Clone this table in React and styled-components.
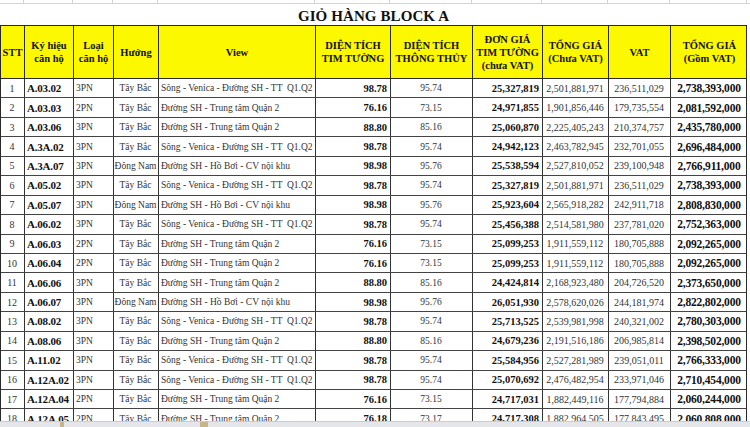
import React from "react";
import styled, { createGlobalStyle } from "styled-components";

const GlobalStyle = createGlobalStyle`
  html, body { margin: 0; padding: 0; background: #ffffff; }
  body { width: 750px; height: 427px; overflow: hidden; font-family: "Liberation Serif", "Times New Roman", serif; }
`;

const COLS = "24px 49px 40px 45px 157px 75px 82px 70px 66px 62px 77px";

const SONG = "Sông - Venica - Đường SH - TT  Q1.Q2";
const TTQ2 = "Đường SH - Trung tâm Quận 2";
const HOBOI = "Đường SH - Hồ Bơi - CV nội khu";

const rows = [
  ["1", "A.03.02", "3PN", "Tây Bắc", SONG, "98.78", "95.74", "25,327,819", "2,501,881,971", "236,511,029", "2,738,393,000"],
  ["2", "A.03.03", "2PN", "Tây Bắc", TTQ2, "76.16", "73.15", "24,971,855", "1,901,856,446", "179,735,554", "2,081,592,000"],
  ["3", "A.03.06", "3PN", "Tây Bắc", TTQ2, "88.80", "85.16", "25,060,870", "2,225,405,243", "210,374,757", "2,435,780,000"],
  ["4", "A.3A.02", "3PN", "Tây Bắc", SONG, "98.78", "95.74", "24,942,123", "2,463,782,945", "232,701,055", "2,696,484,000"],
  ["5", "A.3A.07", "3PN", "Đông Nam", HOBOI, "98.98", "95.76", "25,538,594", "2,527,810,052", "239,100,948", "2,766,911,000"],
  ["6", "A.05.02", "3PN", "Tây Bắc", SONG, "98.78", "95.74", "25,327,819", "2,501,881,971", "236,511,029", "2,738,393,000"],
  ["7", "A.05.07", "3PN", "Đông Nam", HOBOI, "98.98", "95.76", "25,923,604", "2,565,918,282", "242,911,718", "2,808,830,000"],
  ["8", "A.06.02", "3PN", "Tây Bắc", SONG, "98.78", "95.74", "25,456,388", "2,514,581,980", "237,781,020", "2,752,363,000"],
  ["9", "A.06.03", "2PN", "Tây Bắc", TTQ2, "76.16", "73.15", "25,099,253", "1,911,559,112", "180,705,888", "2,092,265,000"],
  ["10", "A.06.04", "2PN", "Tây Bắc", TTQ2, "76.16", "73.15", "25,099,253", "1,911,559,112", "180,705,888", "2,092,265,000"],
  ["11", "A.06.06", "3PN", "Tây Bắc", TTQ2, "88.80", "85.16", "24,424,814", "2,168,923,480", "204,726,520", "2,373,650,000"],
  ["12", "A.06.07", "3PN", "Đông Nam", HOBOI, "98.98", "95.76", "26,051,930", "2,578,620,026", "244,181,974", "2,822,802,000"],
  ["13", "A.08.02", "3PN", "Tây Bắc", SONG, "98.78", "95.74", "25,713,525", "2,539,981,998", "240,321,002", "2,780,303,000"],
  ["14", "A.08.06", "3PN", "Tây Bắc", TTQ2, "88.80", "85.16", "24,679,236", "2,191,516,186", "206,985,814", "2,398,502,000"],
  ["15", "A.11.02", "3PN", "Tây Bắc", SONG, "98.78", "95.74", "25,584,956", "2,527,281,989", "239,051,011", "2,766,333,000"],
  ["16", "A.12A.02", "3PN", "Tây Bắc", SONG, "98.78", "95.74", "25,070,692", "2,476,482,954", "233,971,046", "2,710,454,000"],
  ["17", "A.12A.04", "2PN", "Tây Bắc", TTQ2, "76.16", "73.15", "24,717,031", "1,882,449,116", "177,794,884", "2,060,244,000"],
  ["18", "A.12A.05", "2PN", "Tây Bắc", TTQ2, "76.18", "73.17", "24,717,308", "1,882,964,505", "177,843,495", "2,060,808,000"],
];

// how each column looks in the body
const colStyle = [
  { align: "center", size: 10 },
  { align: "left", size: 11, bold: true, tight: true },
  { align: "left", size: 9.5 },
  { align: "center", size: 9.5 },
  { align: "left", size: 9.5 },
  { align: "right", size: 10.5, bold: true },
  { align: "center", size: 9.5 },
  { align: "right", size: 10.5, bold: true },
  { align: "center", size: 10 },
  { align: "center", size: 10 },
  { align: "center", size: 11.5, bold: true, tight: true },
];

const headers = [
  ["STT"],
  ["Ký hiệu", "căn hộ"],
  ["Loại", "căn hộ"],
  ["Hướng"],
  ["View"],
  ["DIỆN TÍCH", "TIM TƯỜNG"],
  ["DIỆN TÍCH", "THÔNG THỦY"],
  ["ĐƠN GIÁ", "TIM TƯỜNG", "(chưa VAT)"],
  ["TỔNG GIÁ", "(Chưa VAT)"],
  ["VAT"],
  ["TỔNG GIÁ", "(Gồm VAT)"],
];

export default function App() {
  return (
    <>
      <GlobalStyle />
      <Sheet>
        <GridStrip>
          {headers.map((_, i) => <GridTick key={i} />)}
        </GridStrip>
        <TitleRow>
          <Title>GIỎ HÀNG BLOCK A</Title>
        </TitleRow>
        <Table>
          <HeadRow>
            {headers.map((lines, i) => (
              <HeadCell key={i}>
                {lines.map((l, j) => <span key={j}>{l}</span>)}
              </HeadCell>
            ))}
          </HeadRow>
          {rows.map((row, r) => (
            <Row key={r}>
              {row.map((val, c) => (
                <Cell
                  key={c}
                  $align={colStyle[c].align}
                  $size={colStyle[c].size}
                  $bold={colStyle[c].bold}
                  $tight={colStyle[c].tight}
                >
                  {val}
                </Cell>
              ))}
            </Row>
          ))}
        </Table>
        <BottomBar>
          <BarMark />
          <BarMark $wide />
        </BottomBar>
      </Sheet>
    </>
  );
}

const Sheet = styled.div`
  position: relative;
  width: 750px;
  height: 427px;
  overflow: hidden;
  background: #ffffff;
`;

const GridStrip = styled.div`
  display: grid;
  grid-template-columns: ${COLS} 1fr;
  height: 3px;
  border-bottom: 1px solid #d4d4d4;
`;

const GridTick = styled.div`
  border-right: 1px solid #d4d4d4;
`;

const TitleRow = styled.div`
  display: flex;
  justify-content: center;
  align-items: flex-end;
  height: 21px;
  width: 747px;
`;

const Title = styled.div`
  font-size: 15px;
  font-weight: bold;
  color: #111;
  line-height: 16px;
  padding-bottom: 1px;
  letter-spacing: 0.1px;
`;

const Table = styled.div`
  width: 747px;
  border-top: 1px solid #2a2a2a;
  border-left: 1px solid #2a2a2a;
  box-sizing: border-box;
  border-right: 1px solid #2a2a2a;
`;

const HeadRow = styled.div`
  display: grid;
  grid-template-columns: ${COLS};
  height: 53px;
  background: #fcf800;
  border-bottom: 1px solid #2a2a2a;
  box-sizing: border-box;
`;

const HeadCell = styled.div`
  display: flex;
  flex-direction: column;
  justify-content: center;
  align-items: center;
  text-align: center;
  font-size: 10.5px;
  font-weight: bold;
  line-height: 13px;
  color: #111;
  border-right: 1px solid #2a2a2a;
  box-sizing: border-box;
  white-space: nowrap;
  &:last-child { border-right: none; }
`;

const Row = styled.div`
  display: grid;
  grid-template-columns: ${COLS};
  height: 19.45px;
  border-bottom: 1px solid #444;
  box-sizing: border-box;
`;

const Cell = styled.div`
  display: flex;
  align-items: center;
  justify-content: ${(p) => (p.$align === "left" ? "flex-start" : p.$align === "right" ? "flex-end" : "center")};
  padding: 0 3px 0 2px;
  font-size: ${(p) => p.$size}px;
  font-weight: ${(p) => (p.$bold ? "bold" : "normal")};
  letter-spacing: ${(p) => (p.$tight ? "-0.2px" : "0")};
  color: ${(p) => (p.$bold ? "#111" : "#333")};
  border-right: 1px solid #333;
  box-sizing: border-box;
  white-space: pre;
  overflow: hidden;
  &:last-child { border-right: none; }
`;

const BottomBar = styled.div`
  position: absolute;
  left: 0;
  right: 0;
  bottom: 0;
  height: 5px;
  background: #e4e6e9;
  border-top: 1px solid #c9ccd1;
  display: flex;
  gap: 6px;
  padding-left: 60px;
`;

const BarMark = styled.div`
  width: ${(p) => (p.$wide ? "8px" : "4px")};
  background: #c8b48a;
  margin-left: ${(p) => (p.$wide ? "130px" : "0")};
`;
